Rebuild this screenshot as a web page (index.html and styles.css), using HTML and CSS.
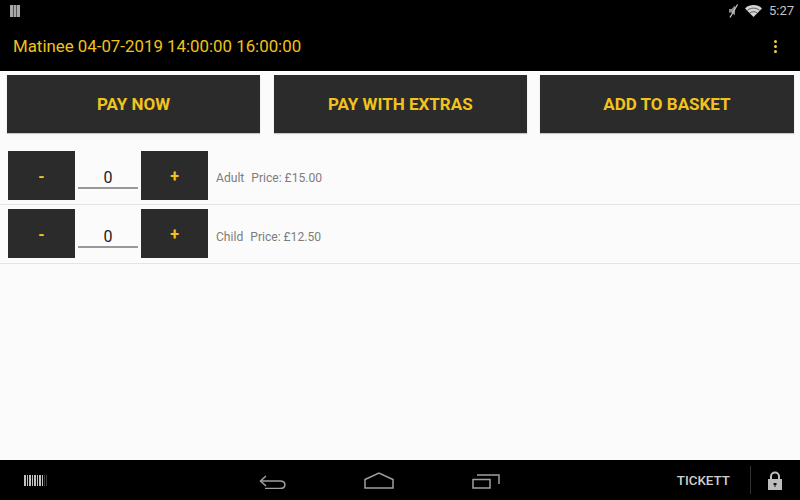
FILE: index.html
```html
<!DOCTYPE html>
<html lang="en">
<head>
  <meta charset="UTF-8">
  <meta name="viewport" content="width=device-width, initial-scale=1.0">
  <title>Tickets</title>
  <link rel="stylesheet" href="styles.css">
</head>
<body>
  <div class="screen">
    <div class="status-bar">
      <svg class="status-left" width="10" height="12" viewBox="0 0 10 12">
        <path d="M0 0h10v12H0z" fill="#a8a8a8"/>
        <path d="M3 0h1v12H3zM6 0h1v12H6z" fill="#555"/>
      </svg>
      <div class="status-right">
        <svg class="mute" width="12" height="14" viewBox="0 0 12 14">
          <path d="M1 5h2.500L7 1.500v10L3.500 8.500H1z" fill="#8f8f8f"/>
          <path d="M9.500 0.500L2 13.500" stroke="#c4c4c4" stroke-width="1.300"/>
        </svg>
        <svg class="wifi" width="17" height="12" viewBox="0 0 17 12">
          <path d="M0 3.400C4.800-1 12.200-1 17 3.400L8.500 12z" fill="#d4d4d4"/>
          <path d="M2.400 5.300C6 2.400 11 2.400 14.600 5.300M4.800 7.900C7 6.300 10 6.300 12.200 7.900" stroke="#000" stroke-width="0.800" fill="none" opacity="0.700"/>
        </svg>
        <span class="clock">5:27</span>
      </div>
    </div>

    <div class="action-bar">
      <div class="title">Matinee 04-07-2019 14:00:00 16:00:00</div>
      <div class="overflow">
        <span></span><span></span><span></span>
      </div>
    </div>

    <div class="content">
      <div class="actions">
        <div class="btn">PAY NOW</div>
        <div class="btn">PAY WITH EXTRAS</div>
        <div class="btn">ADD TO BASKET</div>
      </div>

      <div class="ticket">
        <div class="step">-</div>
        <div class="qty">0</div>
        <div class="step">+</div>
        <div class="label"><span class="type">Adult</span>Price: £15.00</div>
      </div>
      <div class="ticket">
        <div class="step">-</div>
        <div class="qty">0</div>
        <div class="step">+</div>
        <div class="label"><span class="type">Child</span>Price: £12.50</div>
      </div>
    </div>

    <div class="nav-bar">
      <div class="nav-left">
        <svg width="23" height="11" viewBox="0 0 23 11">
          <path d="M0 0h2v11H0zM3 0h1v11H3zM5 0h2v11H5zM8 0h1v11H8zM10 0h2v11h-2zM13 0h1v11h-1zM15 0h2v11h-2zM18 0h1v11h-1z" fill="#c0c0c0"/>
          <path d="M20 0h1v11h-1zM22 0h1v11h-1z" fill="#3c3c3c"/>
        </svg>
      </div>
      <div class="nav-center">
        <svg width="28" height="16" viewBox="0 0 28 16" fill="none" stroke="#a0a0a0" stroke-width="1.500">
          <path d="M1.500 8H21C27.500 8 27.500 15.500 21 15.500H6"/>
          <path d="M7 3L1.500 8L7 13"/>
        </svg>
        <svg width="30" height="17" viewBox="0 0 30 17" fill="none" stroke="#a0a0a0" stroke-width="1.500">
          <path d="M1 7.500L15 1L29 7.500V16H1z"/>
        </svg>
        <svg width="28" height="15" viewBox="0 0 28 15" fill="none" stroke="#a0a0a0" stroke-width="1.500">
          <rect x="1" y="5.500" width="17" height="8.500"/>
          <path d="M5 1H27V10"/>
        </svg>
      </div>
      <div class="nav-right">
        <span class="app-name">TICKETT</span>
        <span class="divider"></span>
        <svg class="lock" width="16" height="19" viewBox="0 0 16 19">
          <path d="M4 9V5.500a4 4 0 0 1 8 0V9" fill="none" stroke="#bdbdbd" stroke-width="2"/>
          <path d="M1 8h14v11H1z" fill="#bdbdbd"/>
          <path d="M6.500 12h3v2h-1v2h-1v-2h-1z" fill="#111"/>
        </svg>
      </div>
    </div>
  </div>
</body>
</html>
```

FILE: styles.css
```css
* {
  padding: 0;
  margin: 0;
  box-sizing: border-box;
  font-family: Roboto, "Liberation Sans", sans-serif;
}

body {
  background-color: #000;
}

.screen {
  width: 800px;
  height: 500px;
  display: flex;
  flex-direction: column;
  overflow: hidden;
}

.status-bar {
  height: 21px;
  flex-shrink: 0;
  background-color: #000;
  display: flex;
  align-items: center;
  justify-content: space-between;
  padding: 0 6px 0 10px;
}

.status-right {
  display: flex;
  align-items: center;
  gap: 7px;
}

.mute {
  margin-right: -2px;
}

.clock {
  color: #c4c4c4;
  font-size: 13px;
}

.action-bar {
  height: 50px;
  flex-shrink: 0;
  background-color: #000;
  display: flex;
  align-items: center;
  justify-content: space-between;
  padding: 0 23px 0 13px;
}

.title {
  color: #f0c11f;
  font-size: 16.85px;
}

.overflow {
  display: flex;
  flex-direction: column;
  gap: 2px;
}

.overflow span {
  width: 3px;
  height: 3px;
  border-radius: 50%;
  background-color: #f2d23a;
}

.content {
  flex: 1;
  background-color: #fbfbfb;
  border-top: 1px solid #fff;
}

.actions {
  display: flex;
  gap: 13.5px;
  padding: 3px 6.5px 0 7px;
  margin-bottom: 13px;
}

.btn {
  flex: 1;
  height: 58px;
  background-color: #2b2b2b;
  color: #f2c31d;
  font-size: 17px;
  font-weight: 700;
  display: flex;
  align-items: center;
  justify-content: center;
  box-shadow: 0 1px 1px rgba(0, 0, 0, 0.2);
}

.ticket {
  height: 59px;
  display: flex;
  align-items: flex-start;
  padding: 5px 0 0 8px;
  border-bottom: 1px solid #e4e4e4;
}

.step {
  width: 67px;
  height: 49px;
  padding-top: 2px;
  background-color: #2b2b2b;
  color: #f2c31d;
  font-size: 16px;
  font-weight: 700;
  display: flex;
  align-items: center;
  justify-content: center;
}

.ticket + .ticket .step {
  margin-top: -1px;
}

.qty {
  width: 60px;
  height: 38px;
  margin: 0 3px;
  border-bottom: 2px solid #999;
  color: #222;
  font-size: 16px;
  text-align: center;
  line-height: 53px;
}

.label {
  margin-left: 8px;
  color: #7d7d7d;
  font-size: 12.1px;
  line-height: 55px;
}

.type {
  margin-right: 7px;
}

.nav-bar {
  height: 40px;
  flex-shrink: 0;
  background-color: #000;
  display: flex;
  align-items: center;
  position: relative;
}

.nav-left {
  padding-left: 24px;
  display: flex;
}

.nav-center {
  position: absolute;
  left: 259px;
  top: 12px;
  display: flex;
  gap: 77px;
  align-items: flex-end;
}

.nav-center svg:last-child {
  margin-left: 1px;
}

.nav-right {
  margin-left: auto;
  display: flex;
  align-items: center;
}

.app-name {
  color: #cfcfcf;
  font-size: 13.4px;
  font-weight: 500;
}

.divider {
  width: 1px;
  height: 28px;
  background-color: #333;
  margin: 0 16px 0 20px;
}

.lock {
  margin-right: 17px;
}
```
